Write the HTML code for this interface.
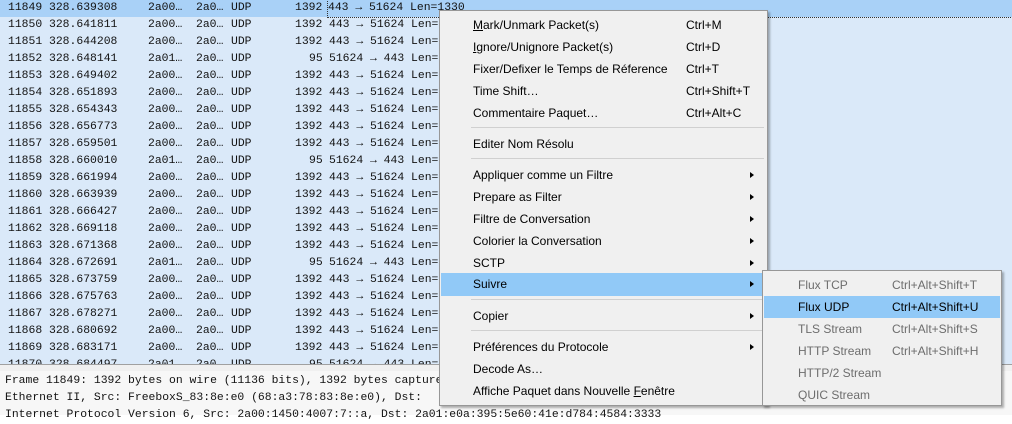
<!DOCTYPE html>
<html><head><meta charset="utf-8"><style>
body{margin:0;width:1012px;height:415px;overflow:hidden;background:#fff;position:relative;font-family:"Liberation Sans",sans-serif}
.list{position:absolute;left:0;top:0;width:1012px;height:364px;background:#dae9f9;overflow:hidden}
.r{position:absolute;left:0;width:1012px;height:17px;font:11.4px/17px "Liberation Mono",monospace;color:#111;white-space:pre}
.r span{position:absolute;top:0}
.sel{background:#a9d1f7}
.sep{position:absolute;left:0;top:364px;width:1012px;height:6px;background:#f0f0f0;border-top:1px solid #a0a0a0}
.det{position:absolute;left:0;top:371px;width:1012px;height:44px;background:#f7f7f7;font:11.4px/17px "Liberation Mono",monospace;color:#111;white-space:pre}
.menu{position:absolute;background:#f0f0f0;border:1px solid #979797;box-shadow:2px 2px 2px rgba(0,0,0,.3);font-size:12px;color:#000}
.mi{position:absolute;left:1px;right:1px;height:22px;line-height:22px}
.mi .t{position:absolute;left:32px}
.mi .k{position:absolute}
.mi .a{position:absolute;right:12px;top:8px;width:0;height:0;border-left:4px solid #000;border-top:3.5px solid transparent;border-bottom:3.5px solid transparent}
.hl{background:#91c9f7}
.ms{position:absolute;left:31px;right:3px;height:1px;background:#d0d0d0}
.g{color:#6d6d6d}
</style></head><body>
<div class="list">
<div class="r sel" style="top:0"><span style="left:8px">11849 328.639308</span><span style="left:148px">2a00…</span><span style="left:196px">2a0…</span><span style="left:231px">UDP</span><span style="left:295px">1392</span><span style="left:328px;outline:1px dotted #333;width:700px">443 → 51624 Len=1330</span></div>
<div class="r" style="top:17px"><span style="left:8px">11850 328.641811</span><span style="left:148px">2a00…</span><span style="left:196px">2a0…</span><span style="left:231px">UDP</span><span style="left:295px">1392</span><span style="left:329px">443 → 51624 Len=</span></div>
<div class="r" style="top:34px"><span style="left:8px">11851 328.644208</span><span style="left:148px">2a00…</span><span style="left:196px">2a0…</span><span style="left:231px">UDP</span><span style="left:295px">1392</span><span style="left:329px">443 → 51624 Len=</span></div>
<div class="r" style="top:51px"><span style="left:8px">11852 328.648141</span><span style="left:148px">2a01…</span><span style="left:196px">2a0…</span><span style="left:231px">UDP</span><span style="left:309px">95</span><span style="left:329px">51624 → 443 Len=</span></div>
<div class="r" style="top:68px"><span style="left:8px">11853 328.649402</span><span style="left:148px">2a00…</span><span style="left:196px">2a0…</span><span style="left:231px">UDP</span><span style="left:295px">1392</span><span style="left:329px">443 → 51624 Len=</span></div>
<div class="r" style="top:85px"><span style="left:8px">11854 328.651893</span><span style="left:148px">2a00…</span><span style="left:196px">2a0…</span><span style="left:231px">UDP</span><span style="left:295px">1392</span><span style="left:329px">443 → 51624 Len=</span></div>
<div class="r" style="top:102px"><span style="left:8px">11855 328.654343</span><span style="left:148px">2a00…</span><span style="left:196px">2a0…</span><span style="left:231px">UDP</span><span style="left:295px">1392</span><span style="left:329px">443 → 51624 Len=</span></div>
<div class="r" style="top:119px"><span style="left:8px">11856 328.656773</span><span style="left:148px">2a00…</span><span style="left:196px">2a0…</span><span style="left:231px">UDP</span><span style="left:295px">1392</span><span style="left:329px">443 → 51624 Len=</span></div>
<div class="r" style="top:136px"><span style="left:8px">11857 328.659501</span><span style="left:148px">2a00…</span><span style="left:196px">2a0…</span><span style="left:231px">UDP</span><span style="left:295px">1392</span><span style="left:329px">443 → 51624 Len=</span></div>
<div class="r" style="top:153px"><span style="left:8px">11858 328.660010</span><span style="left:148px">2a01…</span><span style="left:196px">2a0…</span><span style="left:231px">UDP</span><span style="left:309px">95</span><span style="left:329px">51624 → 443 Len=</span></div>
<div class="r" style="top:170px"><span style="left:8px">11859 328.661994</span><span style="left:148px">2a00…</span><span style="left:196px">2a0…</span><span style="left:231px">UDP</span><span style="left:295px">1392</span><span style="left:329px">443 → 51624 Len=</span></div>
<div class="r" style="top:187px"><span style="left:8px">11860 328.663939</span><span style="left:148px">2a00…</span><span style="left:196px">2a0…</span><span style="left:231px">UDP</span><span style="left:295px">1392</span><span style="left:329px">443 → 51624 Len=</span></div>
<div class="r" style="top:204px"><span style="left:8px">11861 328.666427</span><span style="left:148px">2a00…</span><span style="left:196px">2a0…</span><span style="left:231px">UDP</span><span style="left:295px">1392</span><span style="left:329px">443 → 51624 Len=</span></div>
<div class="r" style="top:221px"><span style="left:8px">11862 328.669118</span><span style="left:148px">2a00…</span><span style="left:196px">2a0…</span><span style="left:231px">UDP</span><span style="left:295px">1392</span><span style="left:329px">443 → 51624 Len=</span></div>
<div class="r" style="top:238px"><span style="left:8px">11863 328.671368</span><span style="left:148px">2a00…</span><span style="left:196px">2a0…</span><span style="left:231px">UDP</span><span style="left:295px">1392</span><span style="left:329px">443 → 51624 Len=</span></div>
<div class="r" style="top:255px"><span style="left:8px">11864 328.672691</span><span style="left:148px">2a01…</span><span style="left:196px">2a0…</span><span style="left:231px">UDP</span><span style="left:309px">95</span><span style="left:329px">51624 → 443 Len=</span></div>
<div class="r" style="top:272px"><span style="left:8px">11865 328.673759</span><span style="left:148px">2a00…</span><span style="left:196px">2a0…</span><span style="left:231px">UDP</span><span style="left:295px">1392</span><span style="left:329px">443 → 51624 Len=</span></div>
<div class="r" style="top:289px"><span style="left:8px">11866 328.675763</span><span style="left:148px">2a00…</span><span style="left:196px">2a0…</span><span style="left:231px">UDP</span><span style="left:295px">1392</span><span style="left:329px">443 → 51624 Len=</span></div>
<div class="r" style="top:306px"><span style="left:8px">11867 328.678271</span><span style="left:148px">2a00…</span><span style="left:196px">2a0…</span><span style="left:231px">UDP</span><span style="left:295px">1392</span><span style="left:329px">443 → 51624 Len=</span></div>
<div class="r" style="top:323px"><span style="left:8px">11868 328.680692</span><span style="left:148px">2a00…</span><span style="left:196px">2a0…</span><span style="left:231px">UDP</span><span style="left:295px">1392</span><span style="left:329px">443 → 51624 Len=</span></div>
<div class="r" style="top:340px"><span style="left:8px">11869 328.683171</span><span style="left:148px">2a00…</span><span style="left:196px">2a0…</span><span style="left:231px">UDP</span><span style="left:295px">1392</span><span style="left:329px">443 → 51624 Len=</span></div>
<div class="r" style="top:357px"><span style="left:8px">11870 328.684497</span><span style="left:148px">2a01…</span><span style="left:196px">2a0…</span><span style="left:231px">UDP</span><span style="left:309px">95</span><span style="left:329px">51624 → 443 Len=</span></div>
</div>
<div class="sep"></div>
<div class="det"><div style="position:absolute;left:5px;top:2px">Frame 11849: 1392 bytes on wire (11136 bits), 1392 bytes captured</div><div style="position:absolute;left:5px;top:19px">Ethernet II, Src: FreeboxS_83:8e:e0 (68:a3:78:83:8e:e0), Dst: </div><div style="position:absolute;left:5px;top:36px">Internet Protocol Version 6, Src: 2a00:1450:4007:7::a, Dst: 2a01:e0a:395:5e60:41e:d784:4584:3333</div></div>

<div class="menu" style="left:439px;top:10px;width:327px;height:394px">
<div class="mi" style="top:3px"><span class="t"><u>M</u>ark/Unmark Packet(s)</span><span class="k" style="left:245px">Ctrl+M</span></div>
<div class="mi" style="top:25px"><span class="t"><u>I</u>gnore/Unignore Packet(s)</span><span class="k" style="left:245px">Ctrl+D</span></div>
<div class="mi" style="top:47px"><span class="t">Fixer/Defixer le Temps de Réference</span><span class="k" style="left:245px">Ctrl+T</span></div>
<div class="mi" style="top:69px"><span class="t">Time Shift…</span><span class="k" style="left:245px">Ctrl+Shift+T</span></div>
<div class="mi" style="top:91px"><span class="t">Commentaire Paquet…</span><span class="k" style="left:245px">Ctrl+Alt+C</span></div>
<div class="ms" style="top:116px"></div>
<div class="mi" style="top:122px"><span class="t">Editer Nom Résolu</span></div>
<div class="ms" style="top:147px"></div>
<div class="mi" style="top:153px"><span class="t">Appliquer comme un Filtre</span><span class="a"></span></div>
<div class="mi" style="top:175px"><span class="t">Prepare as Filter</span><span class="a"></span></div>
<div class="mi" style="top:197px"><span class="t">Filtre de Conversation</span><span class="a"></span></div>
<div class="mi" style="top:219px"><span class="t">Colorier la Conversation</span><span class="a"></span></div>
<div class="mi" style="top:241px"><span class="t">SCTP</span><span class="a"></span></div>
<div class="mi hl" style="top:262px;height:23px;line-height:23px"><span class="t">Suivre</span><span class="a"></span></div>
<div class="ms" style="top:288px"></div>
<div class="mi" style="top:294px"><span class="t">Copier</span><span class="a"></span></div>
<div class="ms" style="top:319px"></div>
<div class="mi" style="top:325px"><span class="t">Préférences du Protocole</span><span class="a"></span></div>
<div class="mi" style="top:347px"><span class="t">Decode As…</span></div>
<div class="mi" style="top:369px"><span class="t">Affiche Paquet dans Nouvelle <u>F</u>enêtre</span></div>
</div>

<div class="menu" style="left:762px;top:270px;width:238px;height:134px">
<div class="mi g" style="top:3px"><span class="t" style="left:34px">Flux TCP</span><span class="k" style="left:128px">Ctrl+Alt+Shift+T</span></div>
<div class="mi hl" style="top:25px"><span class="t" style="left:34px">Flux UDP</span><span class="k" style="left:128px">Ctrl+Alt+Shift+U</span></div>
<div class="mi g" style="top:47px"><span class="t" style="left:34px">TLS Stream</span><span class="k" style="left:128px">Ctrl+Alt+Shift+S</span></div>
<div class="mi g" style="top:69px"><span class="t" style="left:34px">HTTP Stream</span><span class="k" style="left:128px">Ctrl+Alt+Shift+H</span></div>
<div class="mi g" style="top:91px"><span class="t" style="left:34px">HTTP/2 Stream</span></div>
<div class="mi g" style="top:113px"><span class="t" style="left:34px">QUIC Stream</span></div>
</div>
</body></html>
